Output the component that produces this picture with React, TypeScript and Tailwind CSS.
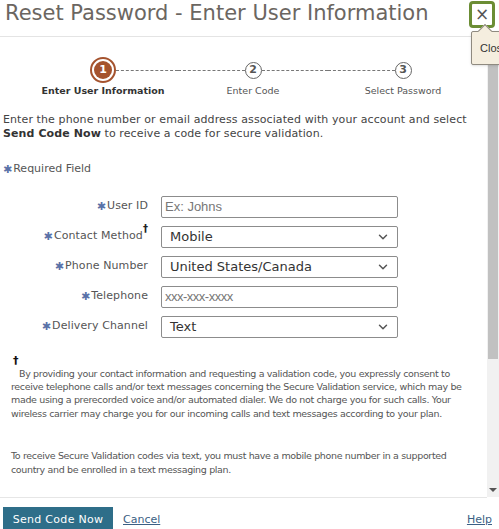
import { ChevronDown } from "lucide-react";

const Star = () => (
  <span className="text-[#5a72a8] text-[11px] mr-[1px] leading-none">✱</span>
);

function Step({
  n,
  label,
  active,
  first,
  last,
}: {
  n: number;
  label: string;
  active?: boolean;
  first?: boolean;
  last?: boolean;
}) {
  return (
    <div className="w-[150px] flex flex-col items-center">
      <div className="w-full h-[26px] flex items-center">
        <div
          className={
            "flex-1 border-t border-dashed border-[#777] " + (first ? "invisible" : "")
          }
        />
        {active ? (
          <div className="w-[26px] h-[26px] rounded-full border-2 border-[#a5532e] flex items-center justify-center">
            <div className="w-[18px] h-[18px] rounded-full bg-[#a5532e] text-white text-[11px] font-bold flex items-center justify-center">
              {n}
            </div>
          </div>
        ) : (
          <div className="w-[17px] h-[17px] rounded-full border-[1.5px] border-[#666] text-[#555] text-[11px] font-bold flex items-center justify-center">
            {n}
          </div>
        )}
        <div
          className={
            "flex-1 border-t border-dashed border-[#777] " + (last ? "invisible" : "")
          }
        />
      </div>
      <div
        className={
          "mt-[2px] text-[9.5px] leading-[12px] whitespace-nowrap " +
          (active ? "font-bold text-[#333]" : "text-[#555]")
        }
      >
        {label}
      </div>
    </div>
  );
}

function Row({
  label,
  dagger,
  children,
}: {
  label: string;
  dagger?: boolean;
  children: React.ReactNode;
}) {
  return (
    <>
      <div className="flex items-center justify-end text-[11px] text-[#555] tracking-[0.1px] whitespace-nowrap">
        <Star />
        {label}
        {dagger && <sup className="text-[#222] text-[10px] font-bold -mt-[6px]">†</sup>}
      </div>
      {children}
    </>
  );
}

function Select({ value }: { value: string }) {
  return (
    <div className="h-[22px] border border-[#8c8c8c] rounded-[2px] flex items-center justify-between pl-[8px] pr-[7px] text-[13px] text-[#333]">
      <span>{value}</span>
      <ChevronDown size={14} strokeWidth={2.5} className="text-[#555]" />
    </div>
  );
}

function Input({ placeholder, small }: { placeholder: string; small?: boolean }) {
  return (
    <div
      className={
        "h-[22px] border border-[#8c8c8c] rounded-[2px] flex items-center pl-[3px] text-[#777] font-['Liberation_Sans',sans-serif] " +
        (small ? "text-[13px] tracking-[-0.5px]" : "text-[13px]")
      }
    >
      {placeholder}
    </div>
  );
}

export default function App() {
  return (
    <div className="relative w-[499px] h-[529px] bg-white overflow-hidden font-['DejaVu_Sans',sans-serif] text-[#444]">
      {/* header */}
      <div className="h-[37px] border-b border-[#e4e4e4] flex items-center justify-between pl-[5px] pr-[4px]">
        <h1 className="text-[21px] text-[#6b6661] -mt-[8px]">
          Reset Password - Enter User Information
        </h1>
        <button className="w-[26px] h-[27px] -mt-[7px] border-[3px] border-[#6b8d34] rounded-[4px] flex items-center justify-center text-[#555] text-[17px] leading-none">
          ×
        </button>
      </div>

      {/* body */}
      <div className="flex h-[460px]">
        <div className="flex-1 overflow-hidden pl-[3px]">
          <div className="flex pl-[25px] pt-[20px]">
            <Step n={1} label="Enter User Information" active first />
            <Step n={2} label="Enter Code" />
            <Step n={3} label="Select Password" last />
          </div>

          <p className="mt-[16px] text-[11px] leading-[14px] tracking-[0.1px] text-[#444]">
            Enter the phone number or email address associated with your account and select{" "}
            <b className="text-[#333]">Send Code Now</b> to receive a code for secure validation.
          </p>

          <div className="mt-[20px] text-[11px] text-[#555] flex items-center">
            <Star />
            Required Field
          </div>

          <div className="mt-[18px] grid grid-cols-[145px_237px] gap-x-[13px] gap-y-[8px]">
            <Row label="User ID">
              <Input placeholder="Ex: Johns" />
            </Row>
            <Row label="Contact Method" dagger>
              <Select value="Mobile" />
            </Row>
            <Row label="Phone Number">
              <Select value="United States/Canada" />
            </Row>
            <Row label="Telephone">
              <Input placeholder="xxx-xxx-xxxx" small />
            </Row>
            <Row label="Delivery Channel">
              <Select value="Text" />
            </Row>
          </div>

          <div className="mt-[17px] pr-[4px] text-[9.5px] leading-[13.4px] tracking-[-0.35px] text-[#555]">
            <div className="text-[#111] font-bold text-[11px] leading-[12px] pl-[10px]">†</div>
            <p className="pl-[8px] indent-[8px]">
              By providing your contact information and requesting a validation code, you expressly
              consent to receive telephone calls and/or text messages concerning the Secure Validation
              service, which may be made using a prerecorded voice and/or automated dialer. We do not
              charge you for such calls. Your wireless carrier may charge you for our incoming calls and
              text messages according to your plan.
            </p>
            <p className="mt-[29px] pl-[8px] pr-[24px]">
              To receive Secure Validation codes via text, you must have a mobile phone number in a
              supported country and be enrolled in a text messaging plan.
            </p>
          </div>
        </div>

        {/* scrollbar */}
        <div className="w-[12px] bg-[#f1f1f1] flex flex-col">
          <div className="h-[8px]" />
          <div className="h-[314px] mx-[1px] bg-[#c1c1c1]" />
          <div className="flex-1" />
          <div className="h-[14px] flex items-center justify-center">
            <div className="w-0 h-0 border-l-[4px] border-r-[4px] border-t-[4px] border-l-transparent border-r-transparent border-t-[#555]" />
          </div>
        </div>
      </div>

      {/* footer */}
      <div className="w-[487px] border-t border-[#e6e6e6]" />
      <div className="flex items-start justify-between pt-[9px] pl-[3px] pr-[7px]">
        <div className="flex items-center gap-[10px]">
          <button className="h-[26px] w-[110px] bg-[#2e6e89] text-white text-[11px] tracking-[0.3px]">
            Send Code Now
          </button>
          <a className="text-[11px] text-[#3b5f84] underline">Cancel</a>
        </div>
        <a className="text-[11px] text-[#3b5f84] underline mt-[5px]">Help</a>
      </div>

      {/* tooltip */}
      <div className="absolute left-[471px] top-[31px] h-[34px] pl-[8px] pr-[10px] bg-[#f5eedf] border border-[#8f8a80] rounded-[2px] flex items-center text-[11px] text-[#333] font-['Liberation_Sans',sans-serif] shadow-sm">
        <div className="absolute -top-[6px] left-[8px] w-[10px] h-[10px] bg-[#f5eedf] border-l border-t border-[#8f8a80] rotate-45" />
        <span className="relative">Close</span>
      </div>
    </div>
  );
}
